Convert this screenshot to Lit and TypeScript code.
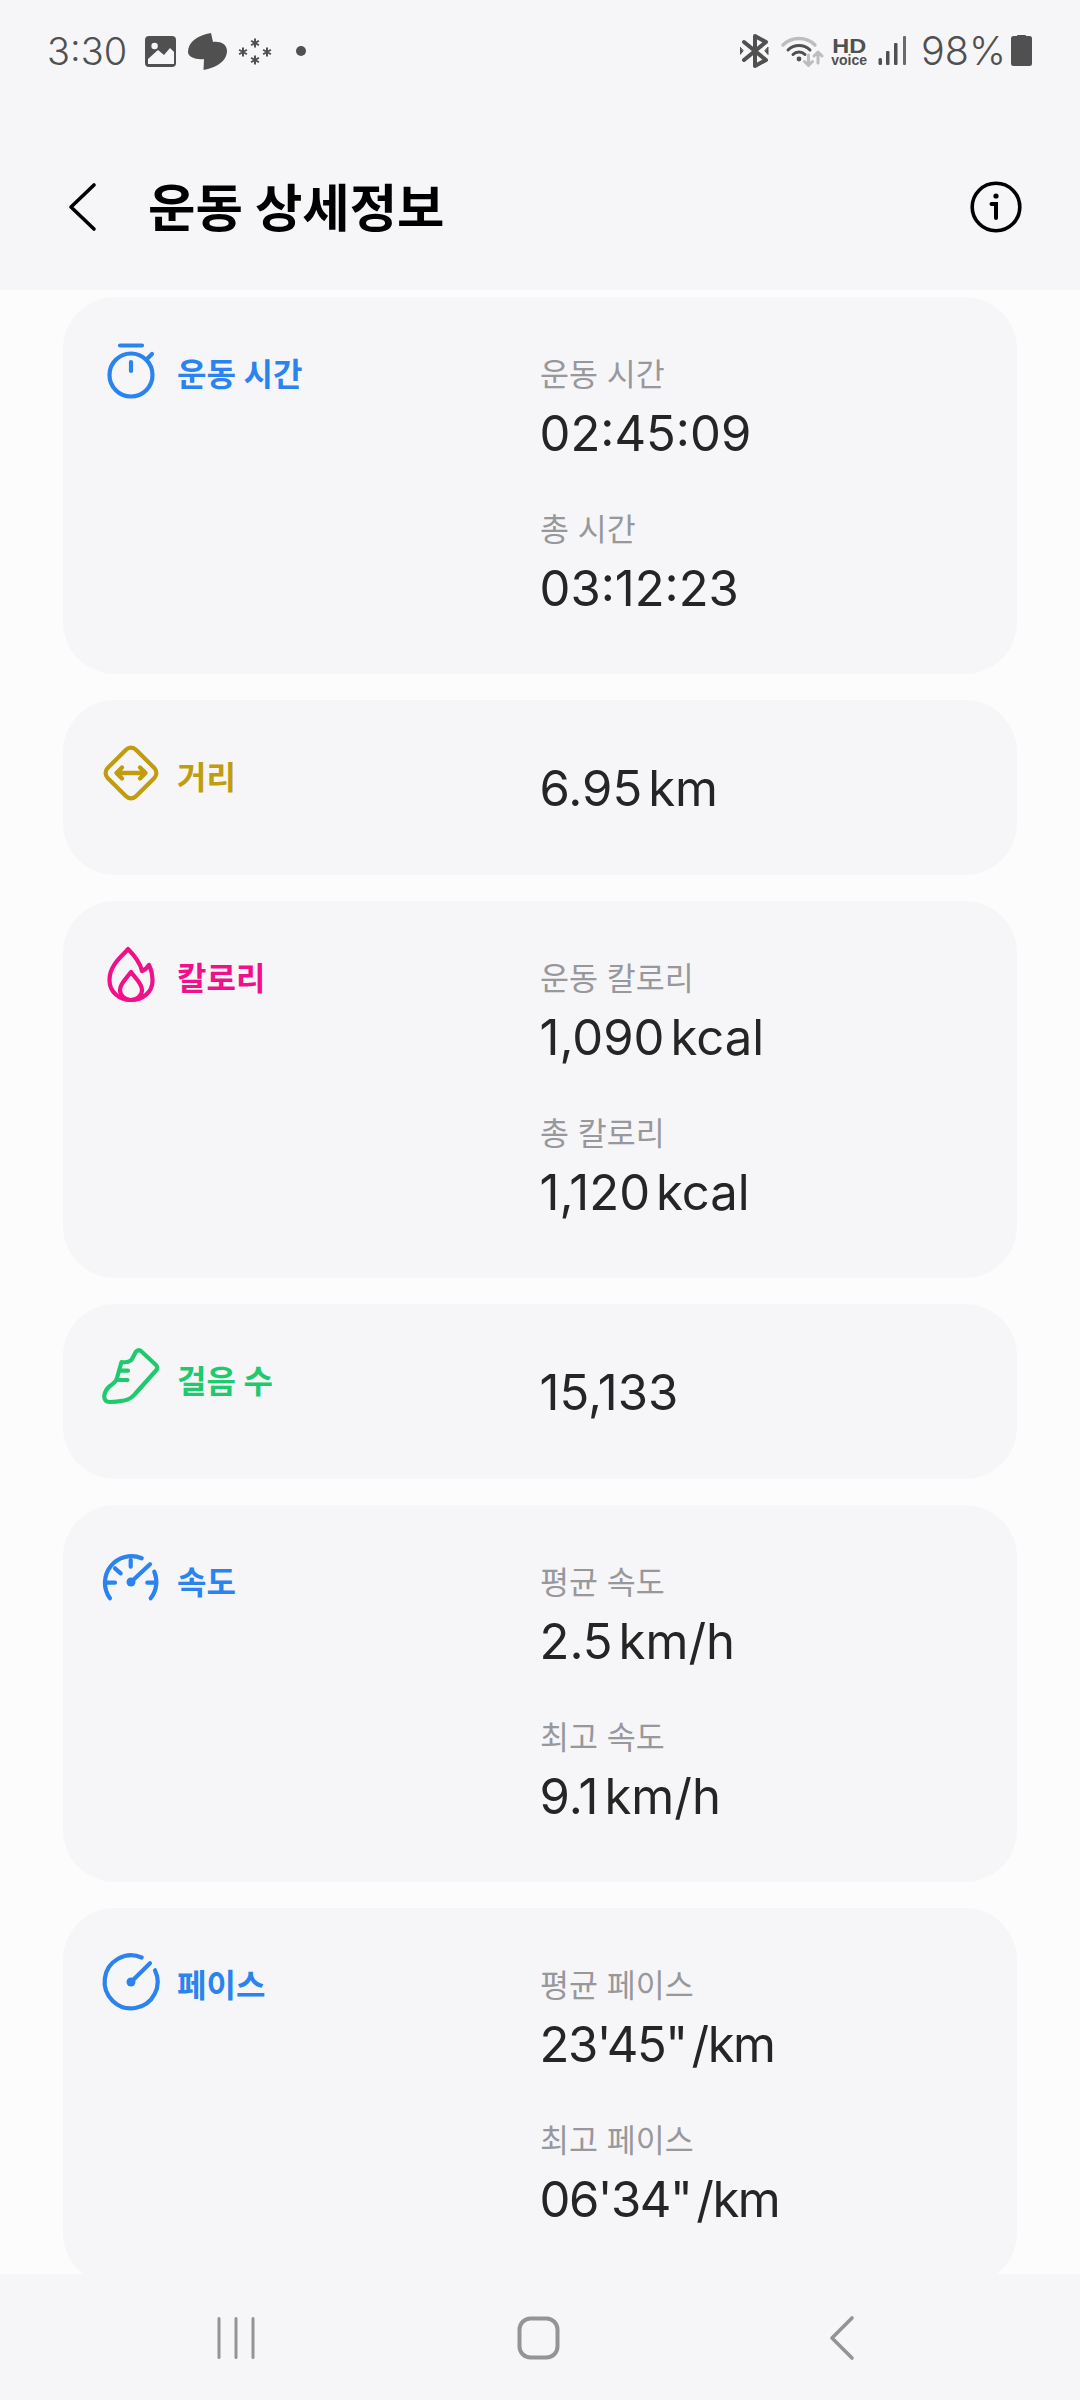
import { LitElement, html, svg, css } from 'lit';
import { customElement } from 'lit/decorators.js';

type Metric = { label: string; value: string; unit?: string };
type Section = { name: string; color: string; icon: unknown; metrics: Metric[]; tight?: boolean };

const BLUE = '#2a83ef';

const stopwatch = svg`
  <circle cx="31" cy="31" r="21.5" />
  <path d="M20 1.5H42M31 18V27M47 15L52 10" />
`;

const diamond = svg`
  <rect x="11" y="6" width="40" height="40" rx="7" transform="rotate(45 31 26)" />
  <path d="M17 26H45M22 20.5L16.5 26L22 31.5M40 20.5L45.5 26L40 31.5" stroke-width="4.4" />
`;

const flame = svg`
  <path d="M28 1C24 7 9.5 16 9.5 32C9.5 44 19 52 31 52C43 52 52.5 44 52.5 33C52.5 27 51.5 22 49 17C47 20 45 22 42 23C40 14 34 7 28 1Z" />
  <path d="M31 24C27 30 20 35 20 42C20 47.5 25 52 31 52C37 52 42 47.5 42 42C42 35 35 30 31 24Z" />
`;

const shoe = svg`
  <path d="M36 0.5Q39 -2 41.5 0.5L56 14Q58.5 17 56 19.5L35 43Q31 48 24 49.5Q16 51 10 51Q4 51 4.2 45Q5 39 10 35Q16 31 17 27L21.5 11Q28 12 31.5 9Z" />
  <path d="M21 19.7H28M18.5 29H27.5" />
`;

const gauge = svg`
  <path d="M10 46.3A26.5 26.5 0 0 1 41.7 6.3M54.3 19.7A26.5 26.5 0 0 1 50.7 46.3" />
  <path d="M30.7 8V14.7M15 16.3L20.7 21.3M6.7 30.7H15M47.3 30.7H55M31 30L50 12.3" />
  <circle cx="31" cy="30" r="4.5" fill="currentColor" stroke="none" />
`;

const pace = svg`
  <path d="M55 15.3A26.5 26.5 0 1 1 41.7 2.5" />
  <path d="M31 27L50 8.3" />
  <circle cx="31" cy="27" r="4.5" fill="currentColor" stroke="none" />
`;

const SECTIONS: Section[] = [
  {
    name: '운동 시간',
    color: BLUE,
    icon: stopwatch,
    metrics: [
      { label: '운동 시간', value: '02:45:09' },
      { label: '총 시간', value: '03:12:23' },
    ],
  },
  { name: '거리', color: '#c19c0c', icon: diamond, metrics: [{ label: '', value: '6.95', unit: 'km' }] },
  {
    name: '칼로리',
    color: '#f0108a',
    icon: flame,
    metrics: [
      { label: '운동 칼로리', value: '1,090', unit: 'kcal' },
      { label: '총 칼로리', value: '1,120', unit: 'kcal' },
    ],
  },
  { name: '걸음 수', color: '#1fca6e', icon: shoe, metrics: [{ label: '', value: '15,133' }] },
  {
    name: '속도',
    color: BLUE,
    icon: gauge,
    metrics: [
      { label: '평균 속도', value: '2.5', unit: 'km/h' },
      { label: '최고 속도', value: '9.1', unit: 'km/h' },
    ],
  },
  {
    name: '페이스',
    color: BLUE,
    icon: pace,
    tight: true,
    metrics: [
      { label: '평균 페이스', value: `23'45"`, unit: '/km' },
      { label: '최고 페이스', value: `06'34"`, unit: '/km' },
    ],
  },
];

function star(cx: number, cy: number) {
  const d = 4.5;
  const e = d * 0.87;
  const f = d * 0.5;
  return svg`<path d="M${cx} ${cy - d}V${cy + d}M${cx - e} ${cy - f}L${cx + e} ${cy + f}M${cx - e} ${cy + f}L${cx + e} ${cy - f}" />`;
}

@customElement('app-root')
export class AppRoot extends LitElement {
  static styles = css`
    :host {
      display: block;
      width: 1080px;
      height: 2400px;
      overflow: hidden;
      background: #fcfcfc;
      font-family: Inter, 'Noto Sans CJK KR', sans-serif;
    }

    .page {
      display: flex;
      flex-direction: column;
      height: 100%;
    }

    .top {
      flex: none;
      height: 290px;
      background: #f6f6f8;
    }

    .status {
      display: flex;
      align-items: center;
      height: 102px;
      padding: 0 48px 0 47px;
      color: #505050;
    }

    .clock {
      font-size: 38px;
      font-weight: 300;
      width: 98px;
    }

    .status svg {
      display: block;
      flex: none;
    }

    .spacer {
      flex: 1;
    }

    .hd {
      display: flex;
      flex-direction: column;
      align-items: center;
      width: 34px;
      margin: 0 12px 0 7px;
      font-family: 'Liberation Sans', sans-serif;
      font-weight: 700;
    }

    .hd b {
      font-size: 21px;
      line-height: 17px;
      transform: scaleX(1.12);
    }

    .hd span {
      font-size: 14px;
      line-height: 12px;
    }

    .battery-text {
      font-size: 39.5px;
      font-weight: 300;
      margin: 0 5px 0 15px;
    }

    .bar {
      display: flex;
      align-items: center;
      height: 118px;
      margin-top: 46px;
      padding: 0 58px 0 68px;
    }

    .bar h1 {
      flex: 1;
      margin: -6px 0 0 51px;
      font-size: 51.5px;
      font-weight: 700;
      color: #000;
    }

    main {
      flex: 1;
      min-height: 0;
      overflow: hidden;
      display: flex;
      flex-direction: column;
      gap: 26px;
      padding: 7px 63px 0;
    }

    .card {
      flex: none;
      box-sizing: border-box;
      min-height: 175px;
      display: grid;
      grid-template-columns: 477px 1fr;
      padding: 57px 0;
      border-radius: 52px;
      background: #f6f6f8;
    }

    .name {
      display: flex;
      align-items: center;
      gap: 17px;
      height: 40px;
      padding-left: 37px;
      font-size: 32px;
      font-weight: 700;
    }

    .name span {
      margin-top: -4px;
    }

    .name svg {
      flex: none;
      overflow: visible;
      fill: none;
      stroke: currentColor;
      stroke-width: 4.2;
      stroke-linecap: round;
      stroke-linejoin: round;
    }

    .metrics {
      display: flex;
      flex-direction: column;
      gap: 47px;
    }

    .label {
      height: 40px;
      line-height: 42px;
      margin-bottom: 8px;
      font-size: 31.5px;
      color: #98989c;
    }

    .value {
      height: 60px;
      line-height: 63px;
      margin-left: -0.5px;
      font-size: 49px;
      color: #252525;
    }

    .tight .value {
      letter-spacing: -1.5px;
    }

    .unit {
      margin-left: 6px;
    }

    .tight .unit {
      margin-left: 5px;
    }

    nav {
      flex: none;
      height: 126px;
      background: #f6f6f8;
    }

    nav svg {
      display: block;
      fill: none;
      stroke: #949494;
      stroke-linecap: round;
      stroke-linejoin: round;
    }
  `;

  private renderNotifications() {
    return html`<svg width="161" height="40" viewBox="145 31 161 40" fill="#505050">
      <rect x="145" y="36" width="31" height="31" rx="4" />
      <circle cx="154.6" cy="46" r="3.2" fill="#f6f6f8" />
      <path d="M148 64V59L158 50L164 55L170 48L174 52V64Z" fill="#f6f6f8" />
      <path d="M211 33C198 35 188 42 188 52C188 57 196 60 204 59L203.5 70C216 68 227 61 227 51C227 44 220 41 213 42Z" />
      <g stroke="#505050" stroke-width="2" fill="none">
        ${star(255, 43)} ${star(243, 52)} ${star(267, 52)} ${star(255, 60)}
      </g>
      <circle cx="301" cy="51" r="5" />
    </svg>`;
  }

  private renderConnectivity() {
    return html`<svg width="85" height="40" viewBox="741 31 85 40" fill="none" stroke-linecap="round" stroke-linejoin="round">
      <path d="M745 42L767 60L756 66V36L767 42L745 60" stroke="#505050" stroke-width="4" />
      <path d="M741 47.5V54.5L744 51ZM769 47.5V54.5L766 51Z" fill="#505050" stroke="#505050" stroke-width="1" />
      <path d="M784 45A23 23 0 0 1 816 45" stroke="#bdbdbd" stroke-width="3.4" />
      <path d="M789 50A15.5 15.5 0 0 1 811 50M794 54.5A8.5 8.5 0 0 1 806 54.5" stroke="#505050" stroke-width="3" />
      <circle cx="800" cy="59" r="2.4" fill="#505050" />
      <path d="M809.5 55V65M805.5 61.5L809.5 65.5L813.5 61.5M819 63V53M815 56L819 52L823 56" stroke="#bdbdbd" stroke-width="3" />
    </svg>`;
  }

  render() {
    return html`<div class="page">
      <header class="top">
        <div class="status">
          <span class="clock">3:30</span>
          ${this.renderNotifications()}
          <span class="spacer"></span>
          ${this.renderConnectivity()}
          <div class="hd"><b>HD</b><span>voice</span></div>
          <svg width="28" height="40" viewBox="878 31 28 40" fill="#505050">
            <rect x="878.5" y="58" width="3.5" height="7" rx="1.5" />
            <rect x="886" y="51" width="3.5" height="14" rx="1" />
            <rect x="894" y="43" width="3.5" height="22" rx="1" />
            <rect x="903" y="36" width="3" height="29" rx="1" fill="#6a6a6a" />
          </svg>
          <span class="battery-text">98%</span>
          <svg width="21" height="40" viewBox="1011 31 21 40" fill="#505050">
            <path d="M1017 36V35.5Q1017 35 1018 35H1025Q1026 35 1026 35.5V36H1029.5Q1032 36 1032 38.5V63.5Q1032 66 1029.5 66H1013.5Q1011 66 1011 63.5V38.5Q1011 36 1013.5 36Z" />
          </svg>
        </div>
        <div class="bar">
          <svg width="29" height="50" viewBox="0 0 29 50" fill="none" stroke="#000" stroke-width="3.6" stroke-linecap="round" stroke-linejoin="round">
            <path d="M26 3L3 25L26 47" />
          </svg>
          <h1>운동 상세정보</h1>
          <svg width="52" height="52" viewBox="0 0 52 52" fill="none" stroke="#000" stroke-linecap="round">
            <circle cx="26" cy="26" r="23.8" stroke-width="3.6" />
            <path d="M21.5 23H26V37" stroke-width="4" />
            <circle cx="26" cy="15" r="2.6" fill="#000" stroke="none" />
          </svg>
        </div>
      </header>
      <main>
        ${SECTIONS.map(
          (s) => html`<section class="card ${s.tight ? 'tight' : ''}">
            <div class="name" style="color: ${s.color}">
              <svg width="60" height="60" viewBox="0 0 60 60">${s.icon}</svg>
              <span>${s.name}</span>
            </div>
            <div class="metrics">
              ${s.metrics.map(
                (m) => html`<div>
                  ${m.label ? html`<div class="label">${m.label}</div>` : null}
                  <div class="value">${m.value}${m.unit ? html`<span class="unit">${m.unit}</span>` : null}</div>
                </div>`,
              )}
            </div>
          </section>`,
        )}
      </main>
      <nav>
        <svg width="1080" height="126" viewBox="0 2274 1080 126">
          <path d="M219 2318.5V2357.5M236 2318.5V2357.5M253 2318.5V2357.5" stroke-width="3" />
          <rect x="519.5" y="2318.5" width="38" height="39" rx="11" stroke-width="4" />
          <path d="M852 2318L832 2338L852 2358" stroke-width="3.6" />
        </svg>
      </nav>
    </div>`;
  }
}
